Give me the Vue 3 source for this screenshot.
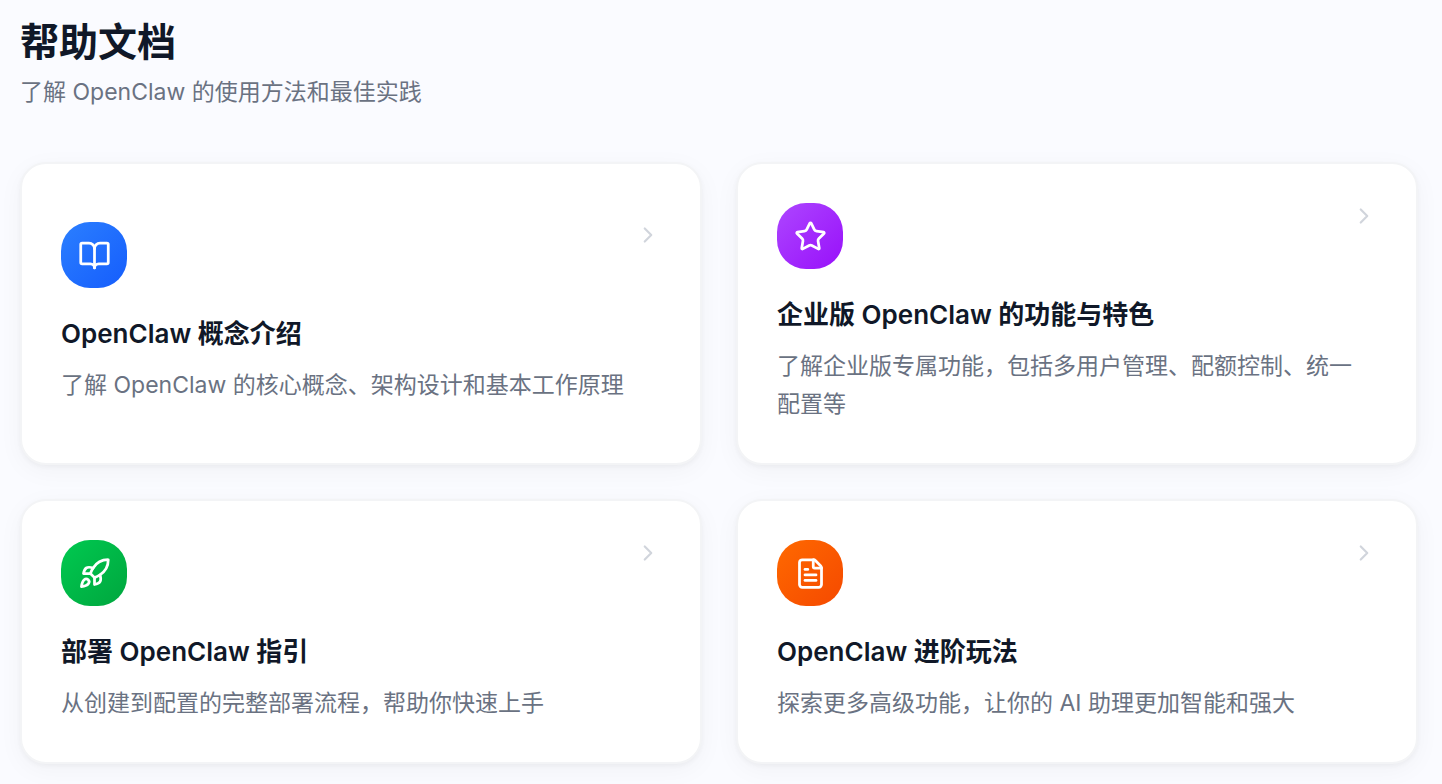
<template>
  <main class="help-page">
    <header class="page-header">
      <h1>帮助文档</h1>
      <p>了解 OpenClaw 的使用方法和最佳实践</p>
    </header>

    <div class="doc-grid">
      <button
        v-for="doc in docs"
        :key="doc.id"
        type="button"
        class="doc-card"
        @click="openDoc(doc)"
      >
        <span class="card-top">
          <span class="doc-icon" :class="doc.color">
            <svg viewBox="0 0 24 24" aria-hidden="true">
              <path v-for="d in doc.icon" :key="d" :d="d" />
            </svg>
          </span>
          <svg class="chevron" viewBox="0 0 24 24" aria-hidden="true">
            <path d="m9 18 6-6-6-6" />
          </svg>
        </span>
        <span class="doc-title">{{ doc.title }}</span>
        <span class="doc-description">{{ doc.description }}</span>
      </button>
    </div>
  </main>
</template>

<script setup>
const emit = defineEmits(['open']);

const docs = [
  {
    id: 'concepts',
    title: 'OpenClaw 概念介绍',
    description: '了解 OpenClaw 的核心概念、架构设计和基本工作原理',
    color: 'blue',
    icon: [
      'M12 7v14',
      'M3 18a1 1 0 0 1-1-1V4a1 1 0 0 1 1-1h5a4 4 0 0 1 4 4 4 4 0 0 1 4-4h5a1 1 0 0 1 1 1v13a1 1 0 0 1-1 1h-6a3 3 0 0 0-3 3 3 3 0 0 0-3-3z'
    ]
  },
  {
    id: 'enterprise',
    title: '企业版 OpenClaw 的功能与特色',
    description: '了解企业版专属功能，包括多用户管理、配额控制、统一配置等',
    color: 'purple',
    icon: [
      'M11.525 2.295a.53.53 0 0 1 .95 0l2.31 4.679a2.123 2.123 0 0 0 1.595 1.16l5.166.756a.53.53 0 0 1 .294.904l-3.736 3.638a2.123 2.123 0 0 0-.611 1.878l.882 5.14a.53.53 0 0 1-.771.56l-4.618-2.428a2.122 2.122 0 0 0-1.973 0L6.396 21.01a.53.53 0 0 1-.77-.56l.881-5.139a2.122 2.122 0 0 0-.611-1.879L2.16 9.795a.53.53 0 0 1 .294-.906l5.165-.755a2.122 2.122 0 0 0 1.597-1.16z'
    ]
  },
  {
    id: 'deploy',
    title: '部署 OpenClaw 指引',
    description: '从创建到配置的完整部署流程，帮助你快速上手',
    color: 'green',
    icon: [
      'M4.5 16.5c-1.5 1.26-2 5-2 5s3.74-.5 5-2c.71-.84.7-2.13-.09-2.91a2.18 2.18 0 0 0-2.91-.09z',
      'M12 15l-3-3a22 22 0 0 1 2-3.95A12.88 12.88 0 0 1 22 2c0 2.72-.78 7.5-6 11a22.35 22.35 0 0 1-4 2z',
      'M9 12H4s.55-3.03 2-4c1.62-1.08 5 0 5 0',
      'M12 15v5s3.03-.55 4-2c1.08-1.62 0-5 0-5'
    ]
  },
  {
    id: 'advanced',
    title: 'OpenClaw 进阶玩法',
    description: '探索更多高级功能，让你的 AI 助理更加智能和强大',
    color: 'orange',
    icon: [
      'M6 22a2 2 0 0 1-2-2V4a2 2 0 0 1 2-2h8a2.4 2.4 0 0 1 1.704.706l3.588 3.588A2.4 2.4 0 0 1 20 8v12a2 2 0 0 1-2 2z',
      'M14 2v5a1 1 0 0 0 1 1h5',
      'M10 9H8',
      'M16 13H8',
      'M16 17H8'
    ]
  }
];

function openDoc(doc) {
  emit('open', doc.id);
}
</script>

<style>
body {
  background: #fafbff;
}
</style>

<style scoped>
.help-page {
  padding: 16px 24px 20px 20px;
  font-family: Inter, "Noto Sans CJK SC", sans-serif;
  color: #101828;
}

.page-header {
  margin-bottom: 53px;
}

.page-header h1 {
  margin: 0;
  font-size: 39px;
  line-height: 52px;
  font-weight: 600;
}

.page-header p {
  margin: 8px 0 0;
  font-size: 23px;
  line-height: 33px;
  color: #6a7282;
}

.doc-grid {
  display: grid;
  grid-template-columns: repeat(2, minmax(0, 1fr));
  gap: 34px;
}

.doc-card {
  padding: 39px 39px 40px;
  border: 2px solid #f3f4f6;
  border-radius: 26px;
  background: #fff;
  box-shadow: 0 2px 5px rgba(0, 0, 0, 0.04), 0 6px 26px rgba(0, 0, 0, 0.04);
  font-family: inherit;
  color: inherit;
  text-align: left;
  cursor: pointer;
}

.card-top {
  display: flex;
  align-items: flex-start;
  justify-content: space-between;
  margin-bottom: 26px;
}

.doc-icon {
  display: flex;
  align-items: center;
  justify-content: center;
  width: 66px;
  height: 66px;
  border-radius: 29px;
}

.doc-icon.blue {
  background: linear-gradient(135deg, #2b7fff, #155dfc);
}

.doc-icon.purple {
  background: linear-gradient(135deg, #ad46ff, #9810fa);
}

.doc-icon.green {
  background: linear-gradient(135deg, #00c950, #00a63e);
}

.doc-icon.orange {
  background: linear-gradient(135deg, #ff6900, #f54900);
}

svg {
  fill: none;
  stroke: currentColor;
  stroke-width: 2;
  stroke-linecap: round;
  stroke-linejoin: round;
}

.doc-icon svg {
  width: 33px;
  height: 33px;
  color: #fff;
}

.chevron {
  width: 26px;
  height: 26px;
  color: #d1d5dc;
}

.doc-title {
  display: block;
  margin-bottom: 13px;
  font-size: 26px;
  line-height: 39px;
  font-weight: 600;
}

.doc-description {
  display: block;
  padding-right: 4px;
  font-size: 23px;
  line-height: 38px;
  color: #6a7282;
}
</style>
